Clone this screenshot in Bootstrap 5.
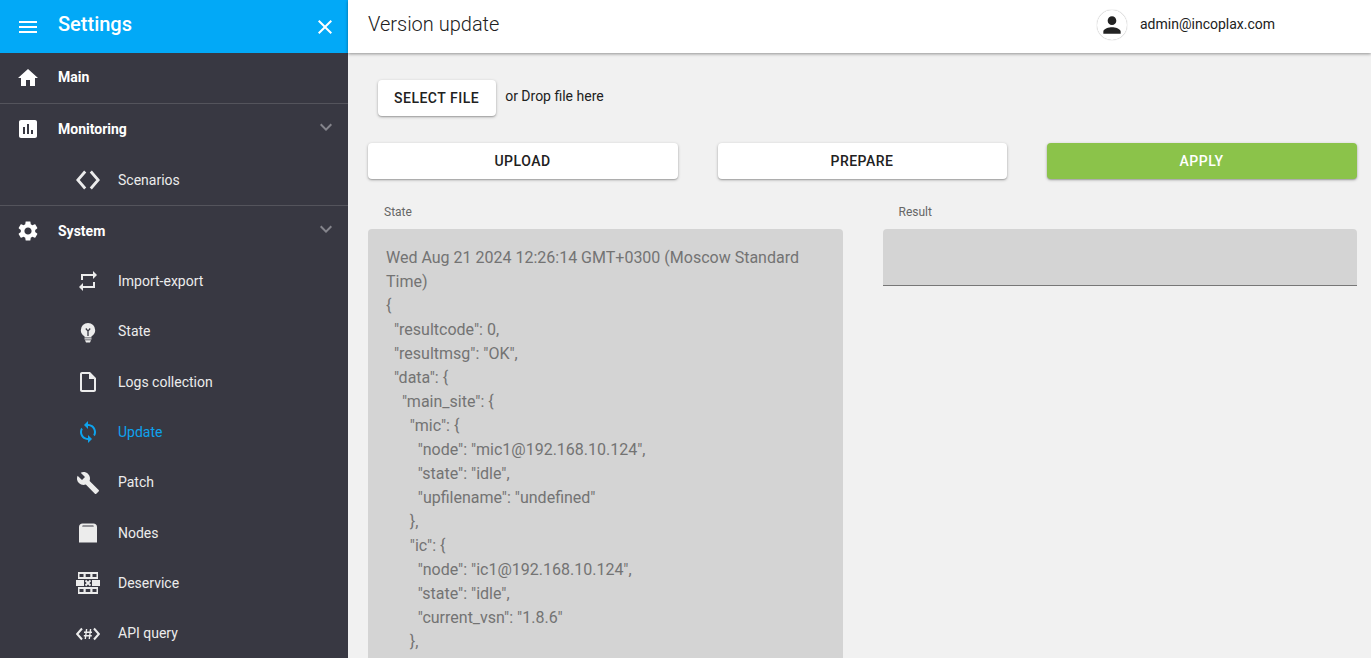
<!DOCTYPE html>
<html lang="en">
<head>
<meta charset="utf-8">
<title>Version update</title>
<link href="https://cdn.jsdelivr.net/npm/bootstrap@5.3.0/dist/css/bootstrap.min.css" rel="stylesheet">
<style>
html,body{height:100%;overflow:hidden}
body{font-family:Roboto,"Liberation Sans",sans-serif;font-size:14px;background:#f1f1f1;color:#212121}
.shell{height:658px;overflow:hidden}
.side{width:348px;flex:none;background:#383842;color:#fff}
.side-head{height:53px;flex:none;background:#02a9f7;padding:0 11px 0 16px;gap:18px}
.side-title{font-size:20px;font-weight:500;line-height:1;margin-bottom:6px}
.ico{width:24px;height:24px;flex:none;fill:currentColor;display:block}
.top-row{height:50.33px;flex:none;padding:0 10px 0 16px;gap:18px;font-weight:700;color:#fff}
.top-row span{margin-top:0}
.top-row.first-top span{margin-top:-2px}
.rule{height:1px;flex:none;background:#54545c}
.sub-row{height:50.33px;flex:none;padding-left:76px;gap:18px;color:#ececec}
.sub-row span{margin-top:-.2px}
.sub-row.first-sub span{margin-top:1px}
.sub-row.on{color:#0ea3ee}
.chev{color:#85858c;margin-top:-4px;margin-left:auto}
.main-pane{min-width:0}
.top-bar{height:53px;flex:none;background:#fff;box-shadow:0 1px 3px rgba(0,0,0,.4);padding-left:20px;position:relative;z-index:1}
.page-title{font-size:20px;font-weight:300;color:#212121;margin-bottom:6px}
.who{width:274px;flex:none;gap:13px;margin-bottom:4px}
.avatar{width:30px;height:30px;border-radius:50%;background:#fff;box-shadow:0 0 1px rgba(0,0,0,.45);color:#222}
.avatar .ico{width:26px;height:26px}
.pad{padding:0 14px 0 20px}
.pick-row{padding:27px 0 27px 10px;gap:9px}
.mat-btn{height:36px;border:0;border-radius:4px;background:#fff;color:#212121;font-size:14px;font-weight:500;letter-spacing:.5px;line-height:36px;padding:0 17px 0 16px;box-shadow:0 1px 3px rgba(0,0,0,.3),0 1px 1px rgba(0,0,0,.12)}
.mat-btn:hover{background:#fff;color:#212121}
.mat-btn.go{background:#8bc34a;color:#fff}
.mat-btn.go:hover{background:#8bc34a;color:#fff}
.wide-a{width:310px;flex:none}
.drop-note{margin-bottom:4px}
.act-row{gap:40px}
.fields{gap:40px;margin-top:23px;display:grid;grid-template-columns:1fr 1fr}
.fld-label{font-size:12px;color:#666;padding-left:16px;line-height:20px;margin-bottom:7px}
.state-box{background:#d4d4d4;border-radius:4px 4px 0 0;color:#737373;font-size:16px;line-height:24px;padding:17px 18px 40px;white-space:pre-wrap;min-height:600px}
.result-box{background:#d4d4d4;border-radius:4px 4px 0 0;border-bottom:1px solid #777;height:57px}
</style>
</head>
<body>
<div class="shell d-flex">
  <aside class="side d-flex flex-column">
    <div class="side-head d-flex align-items-center">
      <svg class="ico" viewBox="0 0 24 24"><path d="M3 18h18v-2H3v2zm0-5h18v-2H3v2zm0-7v2h18V6H3z"/></svg>
      <div class="side-title flex-grow-1">Settings</div>
      <svg class="ico" viewBox="0 0 24 24"><path d="M19 6.41L17.59 5 12 10.59 6.41 5 5 6.41 10.59 12 5 17.59 6.41 19 12 13.41 17.59 19 19 17.59 13.41 12z"/></svg>
    </div>
    <div class="top-row first-top d-flex align-items-center">
      <svg class="ico" viewBox="0 0 24 24"><path d="M10 20v-6h4v6h5v-8h3L12 3 2 12h3v8z"/></svg><span>Main</span>
    </div>
    <div class="rule"></div>
    <div class="top-row d-flex align-items-center">
      <svg class="ico" viewBox="0 0 24 24"><path d="M19 3H5c-1.1 0-2 .9-2 2v14c0 1.1.9 2 2 2h14c1.1 0 2-.9 2-2V5c0-1.1-.9-2-2-2zM9 17H7v-7h2v7zm4 0h-2V7h2v10zm4 0h-2v-4h2v4z"/></svg><span>Monitoring</span>
      <svg class="ico chev" viewBox="0 0 24 24"><path d="M16.59 8.59L12 13.17 7.41 8.59 6 10l6 6 6-6z"/></svg>
    </div>
    <div class="sub-row first-sub d-flex align-items-center">
      <svg class="ico" viewBox="0 0 24 24"><path d="M9.200 3.500L1.800 12l7.400 8.500M14.800 3.500l7.400 8.500-7.400 8.500" fill="none" stroke="currentColor" stroke-width="2.800"/></svg><span>Scenarios</span>
    </div>
    <div class="rule"></div>
    <div class="top-row d-flex align-items-center">
      <svg class="ico" viewBox="0 0 24 24"><path d="M19.14 12.94c.04-.3.06-.61.06-.94 0-.32-.02-.64-.07-.94l2.03-1.58c.18-.14.23-.41.12-.61l-1.92-3.32c-.12-.22-.37-.29-.59-.22l-2.39.96c-.5-.38-1.03-.7-1.62-.94l-.36-2.54c-.04-.24-.24-.41-.48-.41h-3.84c-.24 0-.43.17-.47.41l-.36 2.54c-.59.24-1.13.57-1.62.94l-2.39-.96c-.22-.08-.47 0-.59.22L2.74 8.87c-.12.21-.08.47.12.61l2.03 1.58c-.05.3-.09.63-.09.94s.02.64.07.94l-2.03 1.58c-.18.14-.23.41-.12.61l1.92 3.32c.12.22.37.29.59.22l2.39-.96c.5.38 1.03.7 1.62.94l.36 2.54c.05.24.24.41.48.41h3.84c.24 0 .44-.17.47-.41l.36-2.54c.59-.24 1.13-.56 1.62-.94l2.39.96c.22.08.47 0 .59-.22l1.92-3.32c.12-.22.07-.47-.12-.61l-2.01-1.58zM12 15.6c-1.98 0-3.6-1.62-3.6-3.6s1.62-3.600 3.6-3.600 3.600 1.620 3.600 3.600-1.620 3.600-3.600 3.600z"/></svg><span>System</span>
      <svg class="ico chev" viewBox="0 0 24 24"><path d="M16.59 8.59L12 13.17 7.41 8.59 6 10l6 6 6-6z"/></svg>
    </div>
    <div class="sub-row d-flex align-items-center">
      <svg class="ico" viewBox="0 0 24 24"><path d="M7 7h10v3l4-4-4-4v3H5v6h2V7zm10 10H7v-3l-4 4 4 4v-3h12v-6h-2v4z"/></svg><span>Import-export</span>
    </div>
    <div class="sub-row d-flex align-items-center">
      <svg class="ico" viewBox="0 0 24 24"><path d="M12 3a7.200 7.200 0 0 0-7.200 7.200c0 2.700 1.500 4.800 3.700 6v1.300h7v-1.300c2.200-1.200 3.700-3.300 3.700-6A7.200 7.200 0 0 0 12 3zM8.500 18.300h7v1.200h-7zM9 20.300h6L14 22.500h-4z"/><path d="M9.800 8.500l2.200 2.600 2.200-2.600M12 11v5" fill="none" stroke="#383842" stroke-width="1.300"/></svg><span>State</span>
    </div>
    <div class="sub-row d-flex align-items-center">
      <svg class="ico" viewBox="0 0 24 24"><path d="M14 2H6c-1.100 0-1.990.900-1.990 2L4 20c0 1.100.890 2 1.990 2H18c1.100 0 2-.900 2-2V8l-6-6zm4 18H6V4h7v5h5v11z"/></svg><span>Logs collection</span>
    </div>
    <div class="sub-row on d-flex align-items-center">
      <svg class="ico" viewBox="0 0 24 24"><path d="M12 4V1L8 5l4 4V6c3.310 0 6 2.690 6 6 0 1.010-.250 1.970-.700 2.800l1.460 1.460C19.540 15.030 20 13.570 20 12c0-4.420-3.580-8-8-8zm0 14c-3.310 0-6-2.690-6-6 0-1.010.250-1.970.700-2.800L5.240 7.740C4.460 8.970 4 10.430 4 12c0 4.420 3.580 8 8 8v3l4-4-4-4v3z"/></svg><span>Update</span>
    </div>
    <div class="sub-row d-flex align-items-center">
      <svg class="ico" viewBox="0 0 24 24"><path d="M22.700 19l-9.100-9.100c.900-2.300.400-5-1.500-6.900-2-2-5-2.400-7.400-1.300L9 6 6 9 1.600 4.700C.400 7.100.900 10.100 2.900 12.100c1.900 1.900 4.600 2.400 6.900 1.500l9.100 9.100c.400.400 1 .400 1.400 0l2.300-2.300c.500-.400.500-1.100.100-1.400z"/></svg><span>Patch</span>
    </div>
    <div class="sub-row d-flex align-items-center">
      <svg class="ico" viewBox="0 0 24 24"><path fill-rule="evenodd" d="M6.500 2.500h11c2 0 3.500 1.500 3.500 3.500v15.500H3V6c0-2 1.500-3.500 3.500-3.500zM7 4.600c-.500 0-.800.400-.800.900h11.600c0-.500-.300-.900-.800-.900z"/></svg><span>Nodes</span>
    </div>
    <div class="sub-row d-flex align-items-center">
      <svg class="ico" viewBox="0 0 24 24"><path fill-rule="evenodd" d="M2 1h20v7H2zm1.500 2v3h4V3zm6.200 0v3h4.600V3zm6.800 0v3h4V3zM2 16h20v7H2zm1.500 2v3h4v-3zm6.200 0v3h4.600v-3zm6.800 0v3h4v-3zM0 9h8v6H0zM16 9h8v6h-8z"/><path d="M9.500 9.500l5 5M14.500 9.500l-5 5" fill="none" stroke="currentColor" stroke-width="1.800"/></svg><span>Deservice</span>
    </div>
    <div class="sub-row d-flex align-items-center">
      <svg class="ico" viewBox="0 0 24 24"><path d="M6 6.500L1.200 12 6 17.500M18 6.500l4.800 5.500-4.800 5.500" fill="none" stroke="currentColor" stroke-width="2"/><path d="M10.600 7l-1.300 10M14.600 7l-1.300 10M8 10.200h8M7.800 13.800h8" fill="none" stroke="currentColor" stroke-width="1.400"/></svg><span>API query</span>
    </div>
  </aside>
  <main class="main-pane flex-grow-1 d-flex flex-column">
    <header class="top-bar d-flex align-items-center justify-content-between">
      <div class="page-title">Version update</div>
      <div class="who d-flex align-items-center">
        <div class="avatar d-flex align-items-center justify-content-center">
          <svg class="ico" viewBox="0 0 24 24"><path d="M12 12c2.210 0 4-1.790 4-4s-1.790-4-4-4-4 1.790-4 4 1.790 4 4 4zm0 2c-2.670 0-8 1.340-8 4v2h16v-2c0-2.660-5.330-4-8-4z"/></svg>
        </div>
        <span>admin@incoplax.com</span>
      </div>
    </header>
    <div class="pad">
      <div class="pick-row d-flex align-items-center">
        <button type="button" class="btn mat-btn">SELECT FILE</button>
        <span class="drop-note">or Drop file here</span>
      </div>
      <div class="act-row d-flex">
        <button type="button" class="btn mat-btn wide-a">UPLOAD</button>
        <button type="button" class="btn mat-btn flex-grow-1">PREPARE</button>
        <button type="button" class="btn mat-btn go wide-a">APPLY</button>
      </div>
      <div class="fields">
        <div>
          <div class="fld-label">State</div>
          <div class="state-box">Wed Aug 21 2024 12:26:14 GMT+0300 (Moscow Standard Time)
{
  "resultcode": 0,
  "resultmsg": "OK",
  "data": {
    "main_site": {
      "mic": {
        "node": "mic1@192.168.10.124",
        "state": "idle",
        "upfilename": "undefined"
      },
      "ic": {
        "node": "ic1@192.168.10.124",
        "state": "idle",
        "current_vsn": "1.8.6"
      },</div>
        </div>
        <div>
          <div class="fld-label">Result</div>
          <div class="result-box"></div>
        </div>
      </div>
    </div>
  </main>
</div>
<script src="https://cdn.jsdelivr.net/npm/bootstrap@5.3.0/dist/js/bootstrap.bundle.min.js"></script>
</body>
</html>
